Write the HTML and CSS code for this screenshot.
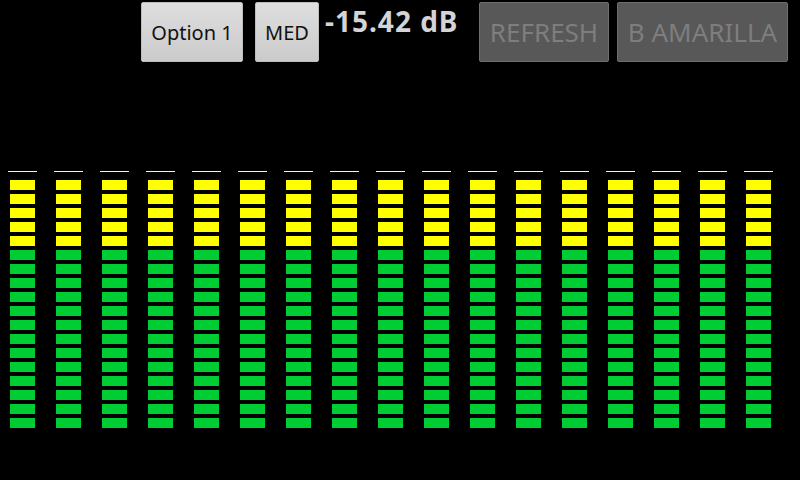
FILE: index.html
```html
<!DOCTYPE html>
<html>
<head>
<meta charset="utf-8">
<link rel="stylesheet" href="styles.css">
</head>
<body>
<div class="toolbar">
  <button class="btn btn-light btn-option">Option 1</button>
  <button class="btn btn-light btn-med">MED</button>
  <div class="level">-15.42 dB</div>
  <button class="btn btn-disabled btn-refresh" disabled>REFRESH</button>
  <button class="btn btn-disabled btn-amarilla" disabled>B AMARILLA</button>
</div>
<div class="meters">
  <div class="meter"><div class="peak"></div><div class="seg seg-yellow"></div><div class="seg seg-green"></div></div>
  <div class="meter"><div class="peak"></div><div class="seg seg-yellow"></div><div class="seg seg-green"></div></div>
  <div class="meter"><div class="peak"></div><div class="seg seg-yellow"></div><div class="seg seg-green"></div></div>
  <div class="meter"><div class="peak"></div><div class="seg seg-yellow"></div><div class="seg seg-green"></div></div>
  <div class="meter"><div class="peak"></div><div class="seg seg-yellow"></div><div class="seg seg-green"></div></div>
  <div class="meter"><div class="peak"></div><div class="seg seg-yellow"></div><div class="seg seg-green"></div></div>
  <div class="meter"><div class="peak"></div><div class="seg seg-yellow"></div><div class="seg seg-green"></div></div>
  <div class="meter"><div class="peak"></div><div class="seg seg-yellow"></div><div class="seg seg-green"></div></div>
  <div class="meter"><div class="peak"></div><div class="seg seg-yellow"></div><div class="seg seg-green"></div></div>
  <div class="meter"><div class="peak"></div><div class="seg seg-yellow"></div><div class="seg seg-green"></div></div>
  <div class="meter"><div class="peak"></div><div class="seg seg-yellow"></div><div class="seg seg-green"></div></div>
  <div class="meter"><div class="peak"></div><div class="seg seg-yellow"></div><div class="seg seg-green"></div></div>
  <div class="meter"><div class="peak"></div><div class="seg seg-yellow"></div><div class="seg seg-green"></div></div>
  <div class="meter"><div class="peak"></div><div class="seg seg-yellow"></div><div class="seg seg-green"></div></div>
  <div class="meter"><div class="peak"></div><div class="seg seg-yellow"></div><div class="seg seg-green"></div></div>
  <div class="meter"><div class="peak"></div><div class="seg seg-yellow"></div><div class="seg seg-green"></div></div>
  <div class="meter"><div class="peak"></div><div class="seg seg-yellow"></div><div class="seg seg-green"></div></div>
</div>
</body>
</html>
```
FILE: styles.css
```css
html, body {
  margin: 0;
  padding: 0;
  background: #000;
  width: 800px;
  height: 480px;
  overflow: hidden;
  font-family: "Noto Sans", "Open Sans", sans-serif;
}

.toolbar {
  display: flex;
  align-items: flex-start;
  padding: 2px 0 0 141px;
  height: 60px;
}

.btn {
  box-sizing: border-box;
  height: 60px;
  margin: 0;
  padding: 0;
  font-family: "Noto Sans", "Open Sans", sans-serif;
  border-radius: 2px;
}

.btn-light {
  background: linear-gradient(#dedede, #cbcbcb);
  border: 1px solid #bdbdbd;
  color: #111;
  font-size: 20px;
}

.btn-option {
  width: 102px;
}

.btn-med {
  width: 64px;
  margin-left: 12px;
}

.level {
  margin-left: 6px;
  margin-top: 1px;
  width: 154px;
  color: #d4d4d4;
  font-size: 28px;
  font-weight: bold;
  line-height: 36px;
  letter-spacing: 1px;
}

.btn-disabled {
  background: #585858;
  border: 1px solid #6e6e6e;
  color: #7e7e7e;
  font-size: 26px;
  letter-spacing: 0;
}

.btn-refresh {
  width: 130px;
}

.btn-amarilla {
  width: 171px;
  margin-left: 8px;
}

.meters {
  display: flex;
  gap: 17px;
  padding: 109px 0 0 8px;
}

.meter {
  width: 29px;
  display: flex;
  flex-direction: column;
  align-items: center;
}

.peak {
  width: 29px;
  height: 1px;
  background: #f2f2f2;
  margin-bottom: 8px;
}

.seg {
  width: 25px;
}

.seg-yellow {
  height: 70px;
  background: repeating-linear-gradient(to bottom, #ffff00 0 10px, transparent 10px 14px);
}

.seg-green {
  height: 178px;
  background: repeating-linear-gradient(to bottom, #00cc33 0 10px, transparent 10px 14px);
}
```
